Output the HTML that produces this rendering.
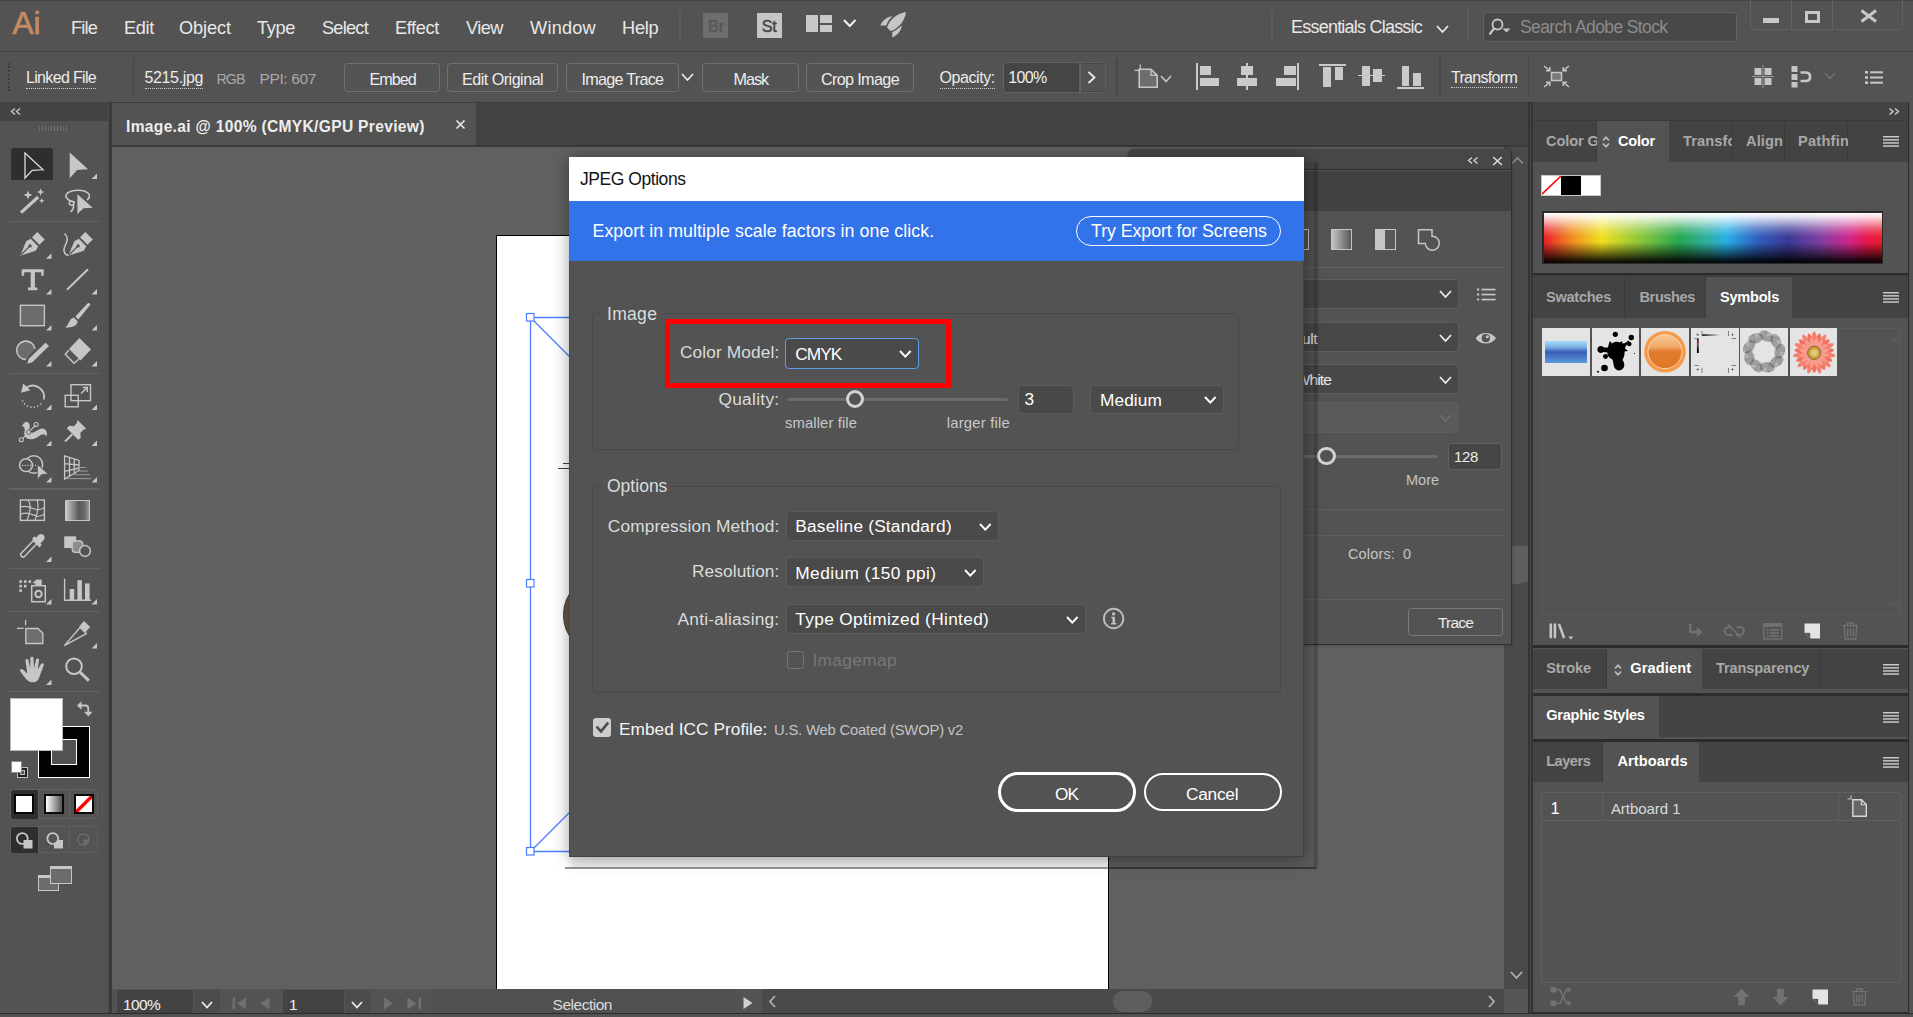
<!DOCTYPE html>
<html lang="en"><head><meta charset="utf-8"><title>Adobe Illustrator - JPEG Options</title>
<style>
html,body{margin:0;padding:0;}
body{width:1913px;height:1017px;overflow:hidden;background:#535353;position:relative;font-family:"Liberation Sans",sans-serif;}
#app{position:absolute;left:0;top:0;width:1913px;height:1017px;overflow:hidden;}
#app div,#app span,#app svg{position:absolute;box-sizing:border-box;}
#app span{white-space:nowrap;}
#app svg{overflow:visible;}
</style></head><body><div id="app">
<div style="left:0px;top:0px;width:1913px;height:1px;background:#444;"></div>
<div style="left:0px;top:51px;width:1913px;height:1px;background:#454545;"></div>
<div style="left:0px;top:102px;width:1913px;height:45px;background:#434343;"></div>
<div style="left:0px;top:102px;width:108px;height:19px;background:#434343;"></div>
<div style="left:0px;top:121px;width:108px;height:892px;background:#535353;"></div>
<div style="left:107.5px;top:102px;width:4.5px;height:911px;background:#3a3a3a;"></div>
<div style="left:107.5px;top:102px;width:1.1px;height:911px;background:#4a4a4a;"></div>
<div style="left:112px;top:102px;width:1416px;height:45px;background:#434343;"></div>
<div style="left:112px;top:103.4px;width:364px;height:41.8px;background:#535353;"></div>
<div style="left:112px;top:145.2px;width:1416px;height:1.8px;background:#3a3a3a;"></div>
<div style="left:112px;top:102px;width:1416px;height:1.4px;background:#3c3c3c;"></div>
<div style="left:112px;top:147px;width:1392px;height:842px;background:#606060;"></div>
<div style="left:1504px;top:147px;width:24px;height:842px;background:#4a4a4a;"></div>
<div style="left:112px;top:989px;width:1392px;height:24px;background:#4a4a4a;"></div>
<div style="left:1504px;top:989px;width:24px;height:24px;background:#565656;"></div>
<div style="left:112px;top:989px;width:650px;height:24px;background:#535353;"></div>
<div style="left:0px;top:1012.5px;width:1913px;height:1.7px;background:#2c2c2c;"></div>
<div style="left:0px;top:1014.2px;width:1913px;height:2.8px;background:#525252;"></div>
<div style="left:1528px;top:102px;width:5px;height:911px;background:#333;"></div>
<div style="left:1530px;top:102px;width:1px;height:911px;background:#4a4a4a;"></div>
<div style="left:1533px;top:102px;width:375px;height:911px;background:#535353;"></div>
<div style="left:1908px;top:102px;width:1.2px;height:911px;background:#2c2c2c;"></div>
<div style="left:1909.2px;top:102px;width:3.8px;height:911px;background:#535353;"></div>
<span style="left:12.5px;top:7.74px;font-size:31.5px;line-height:31.5px;color:#c48a62;-webkit-text-stroke:0.7px #c48a62;">Ai</span>
<span style="left:71px;top:18.89px;font-size:18.2px;line-height:18.2px;color:#e8e8e8;letter-spacing:-0.83px;">File</span>
<span style="left:124px;top:18.89px;font-size:18.2px;line-height:18.2px;color:#e8e8e8;letter-spacing:-0.34px;">Edit</span>
<span style="left:179px;top:18.89px;font-size:18.2px;line-height:18.2px;color:#e8e8e8;letter-spacing:-0.1px;">Object</span>
<span style="left:257px;top:18.89px;font-size:18.2px;line-height:18.2px;color:#e8e8e8;letter-spacing:-0.36px;">Type</span>
<span style="left:322px;top:18.89px;font-size:18.2px;line-height:18.2px;color:#e8e8e8;letter-spacing:-0.76px;">Select</span>
<span style="left:395px;top:18.89px;font-size:18.2px;line-height:18.2px;color:#e8e8e8;letter-spacing:-0.37px;">Effect</span>
<span style="left:466px;top:18.89px;font-size:18.2px;line-height:18.2px;color:#e8e8e8;letter-spacing:-0.53px;">View</span>
<span style="left:530px;top:18.89px;font-size:18.2px;line-height:18.2px;color:#e8e8e8;letter-spacing:0.21px;">Window</span>
<span style="left:622px;top:18.89px;font-size:18.2px;line-height:18.2px;color:#e8e8e8;letter-spacing:-0.23px;">Help</span>
<div style="left:679px;top:10px;width:2px;height:30px;background:#5c5c5c;"></div>
<div style="left:703.4px;top:13.4px;width:24.4px;height:24.3px;background:#6e6e6e;"></div>
<span style="left:707.9px;top:17.99px;font-size:16.2px;line-height:16.2px;color:#575757;letter-spacing:0.1px;-webkit-text-stroke:0.5px #575757;">Br</span>
<div style="left:757.2px;top:13.4px;width:24.5px;height:24.3px;background:#c6c6c6;"></div>
<span style="left:761.8px;top:17.99px;font-size:16.2px;line-height:16.2px;color:#484848;letter-spacing:-0.4px;-webkit-text-stroke:0.5px #484848;">St</span>
<div style="left:805.9px;top:15.2px;width:12.2px;height:16.7px;background:#c8c8c8;"></div>
<div style="left:819.5px;top:15.2px;width:12.1px;height:7.6px;background:#c8c8c8;"></div>
<div style="left:819.5px;top:24.7px;width:12.1px;height:7.2px;background:#c8c8c8;"></div>
<svg style="left:843.25px;top:19.4px;" width="13.5" height="8" viewBox="0 0 13.5 8"><path d="M1 1 L6.75 7 L12.5 1" fill="none" stroke="#f0f0f0" stroke-width="2"/></svg>
<svg style="left:870px;top:5px;" width="40" height="36" viewBox="0 0 40 36"><g fill="#c6c6c6"><path d="M36 6.9 C28 8 19.5 14 17 22.4 L20.5 26 C29 23.5 35 15 36 6.9 Z"/><path d="M22.4 11.2 C17 11.5 12.5 15.5 10.3 20.4 L16.3 20.6 C17.3 17 19.5 13.8 22.4 11.2 Z"/><path d="M31.9 19.9 C31.5 25.5 27.5 30 22.4 32.5 L22.2 26.9 C26 25.3 29.3 23 31.9 19.9 Z"/></g></svg>
<div style="left:1271px;top:10px;width:2px;height:30px;background:#5c5c5c;"></div>
<span style="left:1291px;top:18.26px;font-size:18px;line-height:18px;color:#e8e8e8;letter-spacing:-0.78px;">Essentials Classic</span>
<svg style="left:1436px;top:24.5px;" width="13" height="8" viewBox="0 0 13 8"><path d="M1 1 L6.5 7 L12 1" fill="none" stroke="#e8e8e8" stroke-width="1.8"/></svg>
<div style="left:1467px;top:10px;width:2px;height:30px;background:#5c5c5c;"></div>
<div style="left:1482.5px;top:11.5px;width:254.5px;height:30.5px;background:#484848;border:1px solid #626262;border-radius:3px;"></div>
<svg style="left:1488px;top:17px;" width="24" height="20" viewBox="0 0 24 20"><circle cx="9.5" cy="7.5" r="5" fill="none" stroke="#c6c6c6" stroke-width="1.8"/><path d="M6 11.5 L1.5 17.5" stroke="#c6c6c6" stroke-width="2.2"/><path d="M14.5 11.5 h8 l-4 4 z" fill="#c6c6c6"/></svg>
<span style="left:1520px;top:19.19px;font-size:17.5px;line-height:17.5px;color:#8c8c8c;letter-spacing:-0.62px;">Search Adobe Stock</span>
<div style="left:1749.5px;top:-4px;width:153.5px;height:33.5px;border:1px solid #616161;border-radius:4px;"></div>
<div style="left:1791px;top:0px;width:1px;height:29px;background:#616161;"></div>
<div style="left:1832px;top:0px;width:1px;height:29px;background:#616161;"></div>
<div style="left:1763px;top:17.5px;width:15.5px;height:5px;background:#c8c8c8;"></div>
<div style="left:1804.5px;top:11px;width:15.5px;height:11.5px;border:3px solid #c8c8c8;border-top-width:3.5px;"></div>
<svg style="left:1860px;top:9px;" width="18" height="14" viewBox="0 0 18 14"><path d="M1.5 1.5 L16 12.5 M16 1.5 L1.5 12.5" stroke="#c8c8c8" stroke-width="3" fill="none"/></svg>
<div style="left:8px;top:63px;width:2px;height:28px;border-left:2px dotted #3c3c3c;"></div>
<span style="left:26px;top:70.36px;font-size:16px;line-height:16px;color:#ececec;letter-spacing:-0.67px;border-bottom:1px dotted #cfcfcf;padding-bottom:1.5px;">Linked File</span>
<div style="left:132.5px;top:58px;width:1.5px;height:37px;background:#474747;"></div>
<span style="left:144.5px;top:70.36px;font-size:16px;line-height:16px;color:#ececec;letter-spacing:-0.36px;border-bottom:1px dotted #cfcfcf;padding-bottom:1.5px;">5215.jpg</span>
<span style="left:216.5px;top:71.8px;font-size:14.3px;line-height:14.3px;color:#a9a9a9;letter-spacing:-1px;">RGB</span>
<span style="left:259.5px;top:70.78px;font-size:15.5px;line-height:15.5px;color:#a9a9a9;letter-spacing:-0.37px;">PPI: 607</span>
<div style="left:344px;top:63px;width:95.6px;height:28.5px;border:1.6px solid #707070;border-radius:3.5px;"></div>
<span style="left:369.4px;top:71.09px;font-size:16.2px;line-height:16.2px;color:#ececec;letter-spacing:-1px;">Embed</span>
<div style="left:447px;top:63px;width:111px;height:28.5px;border:1.6px solid #707070;border-radius:3.5px;"></div>
<span style="left:462px;top:71.09px;font-size:16.2px;line-height:16.2px;color:#ececec;letter-spacing:-0.54px;">Edit Original</span>
<div style="left:566px;top:63px;width:112.5px;height:28.5px;border:1.6px solid #707070;border-radius:3.5px;"></div>
<span style="left:581.4px;top:71.09px;font-size:16.2px;line-height:16.2px;color:#ececec;letter-spacing:-0.73px;">Image Trace</span>
<svg style="left:680.5px;top:73px;" width="13" height="8" viewBox="0 0 13 8"><path d="M1 1 L6.5 7 L12 1" fill="none" stroke="#e8e8e8" stroke-width="1.8"/></svg>
<div style="left:702px;top:63px;width:96.7px;height:28.5px;border:1.6px solid #707070;border-radius:3.5px;"></div>
<span style="left:733.5px;top:71.09px;font-size:16.2px;line-height:16.2px;color:#ececec;letter-spacing:-1px;">Mask</span>
<div style="left:806px;top:63px;width:108px;height:28.5px;border:1.6px solid #707070;border-radius:3.5px;"></div>
<span style="left:821px;top:71.09px;font-size:16.2px;line-height:16.2px;color:#ececec;letter-spacing:-0.66px;">Crop Image</span>
<span style="left:939.6px;top:70.36px;font-size:16px;line-height:16px;color:#ececec;letter-spacing:-0.44px;border-bottom:1px dotted #cfcfcf;padding-bottom:1.5px;">Opacity:</span>
<div style="left:1003px;top:62px;width:103px;height:30.5px;background:#454545;border:1.5px solid #626262;border-radius:3.5px;"></div>
<div style="left:1079px;top:63px;width:1.5px;height:28.5px;background:#626262;"></div>
<div style="left:1080.5px;top:63.5px;width:24px;height:27.5px;background:#535353;border-radius:0 2px 2px 0;"></div>
<span style="left:1008.3px;top:70.36px;font-size:16px;line-height:16px;color:#f0f0f0;letter-spacing:-0.63px;">100%</span>
<svg style="left:1087px;top:71px;" width="10" height="13" viewBox="0 0 10 13"><path d="M1.5 1 L7.5 6.5 L1.5 12" fill="none" stroke="#ececec" stroke-width="1.8"/></svg>
<div style="left:1116px;top:58px;width:1.5px;height:37px;background:#474747;"></div>
<svg style="left:1133px;top:63px;" width="26" height="26" viewBox="0 0 26 26"><path d="M7.3 1.5 V7 M1.5 7.3 H6.5" stroke="#c6c6c6" stroke-width="1.3" fill="none"/><path d="M6.2 6.2 H18 L24.2 12.4 V24.2 H6.2 Z" fill="#6e6e6e" stroke="#c6c6c6" stroke-width="1.6"/><path d="M18 6.2 V12.4 H24.2" fill="none" stroke="#c6c6c6" stroke-width="1.3"/></svg>
<svg style="left:1159.5px;top:74.75px;" width="12" height="7.5" viewBox="0 0 12 7.5"><path d="M1 1 L6 6.5 L11 1" fill="none" stroke="#c6c6c6" stroke-width="1.6"/></svg>
<div style="left:1196px;top:63px;width:1.8px;height:27px;background:#cacaca;"></div>
<div style="left:1199.5px;top:66.2px;width:11.9px;height:8.6px;background:#cacaca;"></div>
<div style="left:1199.5px;top:78.3px;width:19.5px;height:7.5px;background:#cacaca;"></div>
<div style="left:1245.9px;top:63px;width:1.8px;height:27px;background:#cacaca;"></div>
<div style="left:1240.7px;top:66.2px;width:12.3px;height:8.6px;background:#cacaca;"></div>
<div style="left:1236.7px;top:78.3px;width:20.1px;height:7.5px;background:#cacaca;"></div>
<div style="left:1297px;top:63px;width:1.8px;height:27px;background:#cacaca;"></div>
<div style="left:1283.9px;top:66.2px;width:11.7px;height:8.6px;background:#cacaca;"></div>
<div style="left:1275.8px;top:78.3px;width:19.8px;height:7.5px;background:#cacaca;"></div>
<div style="left:1319px;top:64px;width:27px;height:1.8px;background:#cacaca;"></div>
<div style="left:1323.3px;top:67px;width:8.2px;height:19.8px;background:#cacaca;"></div>
<div style="left:1334.6px;top:67px;width:8.2px;height:12.8px;background:#cacaca;"></div>
<div style="left:1358px;top:74.6px;width:26.7px;height:1.8px;background:#cacaca;"></div>
<div style="left:1361.7px;top:65.5px;width:8.3px;height:20.1px;background:#cacaca;"></div>
<div style="left:1373px;top:69px;width:8.7px;height:13px;background:#cacaca;"></div>
<div style="left:1396.7px;top:87.2px;width:27px;height:1.8px;background:#cacaca;"></div>
<div style="left:1401.7px;top:66px;width:7.6px;height:20px;background:#cacaca;"></div>
<div style="left:1412.6px;top:73px;width:8.6px;height:13px;background:#cacaca;"></div>
<div style="left:1439px;top:58px;width:1.5px;height:37px;background:#474747;"></div>
<span style="left:1451px;top:69.86px;font-size:16px;line-height:16px;color:#ececec;letter-spacing:-0.7px;border-bottom:1px dotted #cfcfcf;padding-bottom:1.5px;">Transform</span>
<div style="left:1527.5px;top:58px;width:1.5px;height:37px;background:#474747;"></div>
<svg style="left:1543px;top:65px;" width="27" height="23" viewBox="0 0 27 23"><rect x="8.5" y="7.5" width="10" height="8" fill="#7a7a7a" stroke="#c6c6c6" stroke-width="1.5"/><g stroke="#c6c6c6" stroke-width="1.5" fill="none"><path d="M1 1 L6.5 5.5 M6.8 2 V5.8 H3"/><path d="M26 1 L20.5 5.5 M20.2 2 V5.8 H24"/><path d="M1 22 L6.5 17.5 M6.8 21 V17.2 H3"/><path d="M26 22 L20.5 17.5 M20.2 21 V17.2 H24"/></g></svg>
<svg style="left:1752px;top:64.5px;" width="22" height="23" viewBox="0 0 22 23"><g fill="#c6c6c6"><rect x="2.5" y="3" width="7" height="7"/><rect x="12.5" y="3" width="7" height="7"/><rect x="2.5" y="13" width="7" height="7"/><rect x="12.5" y="13" width="7" height="7"/></g><path d="M11 0 V23 M0 11.5 H22" stroke="#9a9a9a" stroke-width="1"/></svg>
<svg style="left:1791px;top:65px;" width="23" height="23" viewBox="0 0 23 23"><g fill="#c6c6c6"><rect x="0.5" y="1" width="6" height="6"/><rect x="0.5" y="9" width="6" height="6"/><rect x="0.5" y="17" width="6" height="5.5"/></g><path d="M9.5 7.5 H15.5 A4.3 4.3 0 0 1 15.5 16 H9.5" fill="none" stroke="#c6c6c6" stroke-width="2.6"/></svg>
<svg style="left:1823.8px;top:71.75px;" width="12" height="7.5" viewBox="0 0 12 7.5"><path d="M1 1 L6 6.5 L11 1" fill="none" stroke="#6e6e6e" stroke-width="1.6"/></svg>
<svg style="left:1864.5px;top:70px;" width="19" height="15" viewBox="0 0 19 15"><g fill="#c6c6c6"><rect x="0" y="1" width="3" height="2.6"/><rect x="0" y="6.2" width="3" height="2.6"/><rect x="0" y="11.4" width="3" height="2.6"/><rect x="5" y="1.3" width="13" height="2"/><rect x="5" y="6.5" width="13" height="2"/><rect x="5" y="11.7" width="13" height="2"/></g></svg>
<svg style="left:10px;top:107.5px;" width="12" height="8" viewBox="0 0 12 8"><path d="M5 0.5 L1.5 3.5 L5 6.5 M10 0.5 L6.5 3.5 L10 6.5" fill="none" stroke="#c8c8c8" stroke-width="1.4"/></svg>
<div style="left:38.5px;top:126px;width:28.5px;height:5px;background:repeating-linear-gradient(90deg,#6e6e6e 0,#6e6e6e 1px,transparent 1px,transparent 3px);"></div>
<div style="left:11px;top:147.5px;width:42px;height:32.5px;background:#2e2e2e;border-radius:2.5px;"></div>
<div style="left:9px;top:221.1px;width:91px;height:1.4px;background:#626262;"></div>
<div style="left:9px;top:372.7px;width:91px;height:1.4px;background:#626262;"></div>
<div style="left:9px;top:488.3px;width:91px;height:1.4px;background:#626262;"></div>
<div style="left:9px;top:567.8px;width:91px;height:1.4px;background:#626262;"></div>
<div style="left:9px;top:611px;width:91px;height:1.4px;background:#626262;"></div>
<div style="left:9px;top:690.7px;width:91px;height:1.4px;background:#626262;"></div>
<div style="left:65.3px;top:500px;width:24.4px;height:20.5px;border:1.4px solid #c6c6c6;background:linear-gradient(90deg,#c8c8c8,#5a5a5a 55%,#6a6a6a 80%,#9a9a9a);"></div>
<svg style="left:0px;top:0px;" width="112" height="1017" viewBox="0 0 112 1017"><path d="M25 153 L43 169.8 L32.2 170.4 L25 178 Z" fill="none" stroke="#dcdcdc" stroke-width="1.3" stroke-linejoin="miter"/><path d="M69.7 152.6 L88 169.3 L77.2 170 L69.7 178.2 Z" fill="#c6c6c6"/><path d="M97 179 v-5.5 l-5.5 5.5 z" fill="#c6c6c6"/><path d="M21 212.6 L38.2 197" stroke="#c6c6c6" stroke-width="3.2"/><path d="M28 190.4 L29.29 193.71 L32.6 195 L29.29 196.29 L28 199.6 L26.71 196.29 L23.4 195 L26.71 193.71 Z" fill="#c6c6c6"/><path d="M40.6 188.2 L41.66 190.94 L44.4 192 L41.66 193.06 L40.6 195.8 L39.54 193.06 L36.8 192 L39.54 190.94 Z" fill="#c6c6c6"/><path d="M41.7 198 L42.48 200.02 L44.5 200.8 L42.48 201.58 L41.7 203.6 L40.92 201.58 L38.9 200.8 L40.92 200.02 Z" fill="#c6c6c6"/><path d="M75 202 C67 201 64 196 67.5 193 C72 189.5 84 189 88.5 193.5 C90.5 196 89 198.5 87 200" fill="none" stroke="#c6c6c6" stroke-width="1.6"/><path d="M74.5 203.5 C73.5 200.5 69.5 200.5 69.2 203 C69 205.5 72.5 206 73.5 204 C74 207 73 210 70.5 212" fill="none" stroke="#c6c6c6" stroke-width="1.5"/><path d="M77.4 194.3 L92.8 207.8 L83.5 208.2 L77.4 214 Z" fill="#c6c6c6"/><g transform="translate(19.7 231.7)"><path d="M0.5 24 L6.5 9.5 L11 7 L18.5 14.5 L16 19 Z" fill="#c6c6c6"/><path d="M1.2 23.3 L9.5 15" stroke="#535353" stroke-width="1.2"/><circle cx="10.3" cy="14.2" r="1.7" fill="#535353"/><path d="M12.3 5.6 L17.6 0.3 L25 7.7 L19.7 13 Z" fill="#c6c6c6"/></g><path d="M51.5 258.7 v-5.5 l-5.5 5.5 z" fill="#c6c6c6"/><g transform="translate(67.8 231.7)"><path d="M0.5 24 L6.5 9.5 L11 7 L18.5 14.5 L16 19 Z" fill="#c6c6c6"/><path d="M1.2 23.3 L9.5 15" stroke="#535353" stroke-width="1.2"/><circle cx="10.3" cy="14.2" r="1.7" fill="#535353"/><path d="M12.3 5.6 L17.6 0.3 L25 7.7 L19.7 13 Z" fill="#c6c6c6"/></g><path d="M64.6 233.5 C69 238 67 242 65 246 C63 250 64 255 68.5 255.3" fill="none" stroke="#c6c6c6" stroke-width="1.5"/><path d="M21.7 269.3 H43.7 V275.8 H41.2 V272.3 H34.9 V287.5 H37.4 V290.2 H28 V287.5 H30.7 V272.3 H24.2 V275.8 H21.7 Z" fill="#c6c6c6"/><path d="M51.5 294.5 v-5.5 l-5.5 5.5 z" fill="#c6c6c6"/><path d="M67 289.8 L88 269.3" stroke="#c6c6c6" stroke-width="2"/><path d="M97 294.5 v-5.5 l-5.5 5.5 z" fill="#c6c6c6"/><rect x="20.4" y="305.3" width="24" height="20.4" fill="#6c6c6c" stroke="#c6c6c6" stroke-width="1.4"/><path d="M51.5 330.5 v-5.5 l-5.5 5.5 z" fill="#c6c6c6"/><path d="M75.3 316.6 L87.5 303.6 C89 302 91 303.5 90 305.3 L78.3 319.5 Z" fill="#c6c6c6"/><path d="M73.8 317.6 L77.3 320.8 C78.5 324.5 73 328.5 65.3 327.2 C69 325.5 68.5 319 73.8 317.6 Z" fill="#c6c6c6"/><path d="M97 330.5 v-5.5 l-5.5 5.5 z" fill="#c6c6c6"/><path d="M26 359.5 A9.2 9.2 0 1 1 35 349" fill="#6c6c6c" stroke="#c6c6c6" stroke-width="1.6"/><path d="M45.5 342.8 L49 346 L32 362.5 L27.3 363.6 L28.6 359 Z" fill="#c6c6c6"/><path d="M51.5 366.5 v-5.5 l-5.5 5.5 z" fill="#c6c6c6"/><path d="M79.4 338 L91 349.6 L80.5 360.5 L69 349 Z" fill="#c6c6c6"/><path d="M68.7 350.2 L65.3 354.3 L74 363.3 L79.3 358.8" fill="none" stroke="#c6c6c6" stroke-width="1.5"/><path d="M97 366.5 v-5.5 l-5.5 5.5 z" fill="#c6c6c6"/><path d="M26 388 A11.3 11.3 0 0 1 43.8 399.5" fill="none" stroke="#c6c6c6" stroke-width="1.8"/><path d="M21 392.8 L23.2 383.6 L30.3 390.3 Z" fill="#c6c6c6"/><path d="M22.3 400.5 A11.3 11.3 0 0 0 42.5 401.5" fill="none" stroke="#c6c6c6" stroke-width="1.6" stroke-dasharray="1.3 2.2"/><path d="M51.5 410 v-5.5 l-5.5 5.5 z" fill="#c6c6c6"/><rect x="71" y="384.7" width="19.5" height="16" fill="none" stroke="#c6c6c6" stroke-width="1.4"/><rect x="65.2" y="395.3" width="13" height="11.5" fill="none" stroke="#c6c6c6" stroke-width="1.4"/><path d="M81 393.5 L87 387.8 M82.8 387.5 H87.3 V392" fill="none" stroke="#c6c6c6" stroke-width="1.4"/><path d="M97 410 v-5.5 l-5.5 5.5 z" fill="#c6c6c6"/><path d="M22 426 C26 418 31 423 29.5 428 C28.5 431.5 31 434 34.5 432 C39 429.5 44 426 46.5 431.5 C47.5 434 46.5 436 46 436.5 C45 433 42 434 38.5 436.5 C33 440.5 26 440.5 24.5 435 C23.5 431.5 27 428 22 426 Z" fill="#c6c6c6"/><path d="M21.3 439.8 L36.2 424.5" stroke="#c6c6c6" stroke-width="1.1"/><circle cx="21.3" cy="439.8" r="2" fill="#535353" stroke="#c6c6c6" stroke-width="1.1"/><circle cx="36.2" cy="424.5" r="2" fill="#535353" stroke="#c6c6c6" stroke-width="1.1"/><circle cx="28.7" cy="432.2" r="2.2" fill="#c6c6c6" stroke="#535353" stroke-width="0.8"/><path d="M51.5 446 v-5.5 l-5.5 5.5 z" fill="#c6c6c6"/><path d="M77.5 420 L86.2 428.7 L83.5 429.7 L80.3 433 L80.8 437.5 L78.3 440 L66.8 428.3 L69.3 425.8 L73.8 426.2 L77 423 Z" fill="#c6c6c6"/><path d="M72.3 434.2 L65 441.5" stroke="#c6c6c6" stroke-width="2"/><path d="M97 446 v-5.5 l-5.5 5.5 z" fill="#c6c6c6"/><circle cx="33.8" cy="464.5" r="8.8" fill="none" stroke="#c6c6c6" stroke-width="1.5"/><circle cx="26" cy="465.2" r="6.4" fill="#535353" stroke="#c6c6c6" stroke-width="1.5"/><path d="M22 465.3 H36" stroke="#c6c6c6" stroke-width="1.3" stroke-dasharray="1.2 1.4"/><path d="M37.4 464.5 L48.3 474 L41.7 474.5 L37.4 479.5 Z" fill="#c6c6c6" stroke="#535353" stroke-width="0.8"/><path d="M51.5 482.5 v-5.5 l-5.5 5.5 z" fill="#c6c6c6"/><path d="M64.6 455.8 L79 460.5 V470.5 L64.6 479 Z M69.5 457.5 V476 M74.3 459 V473.3 M64.6 463.6 L79 465 M64.6 471.3 L79 468" fill="none" stroke="#c6c6c6" stroke-width="1.3"/><path d="M79 467.5 H86 M76 471 H88 M71 474.7 H90 M66 478.6 H91.5" fill="none" stroke="#9a9a9a" stroke-width="1"/><path d="M97 482.5 v-5.5 l-5.5 5.5 z" fill="#c6c6c6"/><rect x="20.4" y="500" width="24" height="20.4" fill="none" stroke="#c6c6c6" stroke-width="1.4"/><path d="M20.4 507 C28 505 31 508 36 509.5 C39 510.5 42 509 44.4 507.5 M20.4 514.5 C26 511 32 514.5 36.5 516 C40 517 42 515.5 44.4 514 M28 500 C32 505 30 512 27 520.4 M37 500 C39.5 506 37.5 513 35 520.4" fill="none" stroke="#c6c6c6" stroke-width="1.2"/><path d="M21.5 556.5 L20.5 554 L33.5 540.5 L36.8 543.8 L23.8 557.2 Z" fill="none" stroke="#c6c6c6" stroke-width="1.5" stroke-linejoin="round"/><path d="M32 538.8 L34.5 536.3 L36 537.7 L38.5 535 C40.5 533 43.5 534 44.3 536 C45 538 44.5 539.5 43 541 L40.3 543.5 L41.8 545 L39.3 547.5 Z" fill="#c6c6c6"/><path d="M51.5 562 v-5.5 l-5.5 5.5 z" fill="#c6c6c6"/><rect x="64.2" y="536.3" width="12" height="11.8" fill="#c6c6c6"/><rect x="72.2" y="541" width="10.5" height="11.3" rx="3" fill="#8c8c8c" stroke="#c6c6c6" stroke-width="1.3"/><circle cx="85" cy="551" r="5.4" fill="#535353" stroke="#c6c6c6" stroke-width="1.5"/><rect x="31.7" y="585.7" width="13.6" height="16" fill="none" stroke="#c6c6c6" stroke-width="1.5"/><rect x="35.4" y="579.6" width="6.3" height="6" fill="#c6c6c6"/><rect x="33.2" y="581.5" width="3" height="1.8" fill="#c6c6c6"/><circle cx="38.5" cy="594" r="3.2" fill="none" stroke="#c6c6c6" stroke-width="2"/><rect x="19.3" y="580.3" width="2.6" height="2.6" fill="#c6c6c6"/><rect x="23.9" y="580.3" width="2.6" height="2.6" fill="#c6c6c6"/><rect x="28.5" y="580.3" width="2.6" height="2.6" fill="#c6c6c6"/><rect x="19.3" y="584.8" width="2.6" height="2.6" fill="#c6c6c6"/><rect x="23.9" y="584.8" width="2.6" height="2.6" fill="#c6c6c6"/><rect x="19.3" y="589.3" width="2.6" height="2.6" fill="#c6c6c6"/><path d="M51.5 604.5 v-5.5 l-5.5 5.5 z" fill="#c6c6c6"/><path d="M64.6 578.7 V600.3 H91" fill="none" stroke="#c6c6c6" stroke-width="1.4"/><rect x="69.7" y="589" width="4.5" height="11" fill="#c6c6c6"/><rect x="77.4" y="580.2" width="4.5" height="19.8" fill="#c6c6c6"/><rect x="85" y="583.4" width="4.6" height="16.6" fill="#c6c6c6"/><path d="M97 604.5 v-5.5 l-5.5 5.5 z" fill="#c6c6c6"/><path d="M25.6 620 V625.3 M17 628.3 H23.6" stroke="#c6c6c6" stroke-width="1.3"/><path d="M25.8 628.5 H38 L42.8 633.3 V643.5 H25.8 Z" fill="#6e6e6e" stroke="#c6c6c6" stroke-width="1.4"/><path d="M64.4 645.6 L80 627.5 L86.3 633.5 Z" fill="none" stroke="#c6c6c6" stroke-width="1.4" stroke-linejoin="miter"/><path d="M79.3 626.3 L84 621 L90.2 627 L85.5 632.3 Z" fill="#c6c6c6"/><path d="M97 648.5 v-5.5 l-5.5 5.5 z" fill="#c6c6c6"/><path d="M30 682 C26 680 23 675 20.3 671.5 C19.3 669.5 21.5 668 23.2 669.7 L27.3 673.5 L25.5 661 C25.2 658.8 28 658.3 28.5 660.5 L30.3 668.5 L30.3 658.5 C30.3 656.2 33.5 656.2 33.5 658.5 L34 668.3 L36 659.8 C36.5 657.8 39.3 658.3 39 660.5 L37.8 669.5 L41 664 C42 662.3 44.5 663.3 43.7 665.3 C42 670 40.5 674 39 678 C38 680.5 36.5 682 34 682.3 Z" fill="#c6c6c6"/><path d="M51.5 685 v-5.5 l-5.5 5.5 z" fill="#c6c6c6"/><circle cx="74" cy="666.3" r="7.8" fill="none" stroke="#c6c6c6" stroke-width="2"/><path d="M79.8 672 L88.8 680.6" stroke="#c6c6c6" stroke-width="3"/></svg>
<div style="left:37.6px;top:725.5px;width:52.8px;height:52.8px;background:#030303;border:1px solid #fff;"></div>
<div style="left:51px;top:739px;width:26.2px;height:25.5px;background:#535353;border:1px solid #fff;"></div>
<div style="left:10.3px;top:698.3px;width:53.2px;height:53.2px;background:#fff;border:1px solid #b8b8b8;"></div>
<svg style="left:76px;top:700px;" width="18" height="18" viewBox="0 0 18 18"><path d="M4.5 5.5 H9.5 C11.5 5.5 12.3 6.5 12.3 8.5 V12" fill="none" stroke="#c6c6c6" stroke-width="1.8"/><path d="M1 5.5 L5.5 1.3 V9.7 Z" fill="#c6c6c6"/><path d="M12.3 16.5 L8 11.8 H16.6 Z" fill="#c6c6c6"/></svg>
<div style="left:16.5px;top:766.5px;width:11px;height:11px;background:#222;border:1px solid #c0c0c0;"></div>
<div style="left:19.5px;top:769.5px;width:5px;height:5px;background:#535353;border:1px solid #c0c0c0;"></div>
<div style="left:10.8px;top:761px;width:11.7px;height:11.5px;background:#fff;border:1px solid #8a8a8a;"></div>
<div style="left:10.3px;top:788.8px;width:87.3px;height:30.5px;border:1px solid #626262;border-radius:3.5px;"></div>
<div style="left:11px;top:789.5px;width:27.2px;height:29.1px;background:#2e2e2e;border-radius:3px 0 0 3px;"></div>
<div style="left:38.2px;top:789.5px;width:1px;height:29.1px;background:#626262;"></div>
<div style="left:69px;top:789.5px;width:1px;height:29.1px;background:#626262;"></div>
<div style="left:14px;top:794px;width:20.2px;height:20.2px;background:#fff;border:2px solid #0a0a0a;"></div>
<div style="left:44px;top:794px;width:19.8px;height:20.2px;border:2px solid #0a0a0a;background:linear-gradient(90deg,#fff,#555);"></div>
<div style="left:74px;top:794px;width:20.2px;height:20.2px;background:#fff;border:2px solid #0a0a0a;"></div>
<svg style="left:76px;top:796px;overflow:hidden;" width="16.2" height="16.2" viewBox="0 0 16.2 16.2"><path d="M0 16.2 L16.2 0" stroke="#f00" stroke-width="3.4"/></svg>
<div style="left:10.3px;top:826.4px;width:87.3px;height:27.1px;border:1px solid #5e5e5e;border-radius:3.5px;"></div>
<div style="left:11px;top:827px;width:27.2px;height:25.8px;background:#2e2e2e;border-radius:3px 0 0 3px;"></div>
<div style="left:38.2px;top:827px;width:1px;height:25.8px;background:#5e5e5e;"></div>
<div style="left:69px;top:827px;width:1px;height:25.8px;background:#5e5e5e;"></div>
<svg style="left:14px;top:830px;" width="82" height="22" viewBox="0 0 82 22"><circle cx="8.3" cy="8.5" r="5.4" fill="none" stroke="#c6c6c6" stroke-width="1.8"/><rect x="9.5" y="10" width="9" height="8.5" fill="#c6c6c6"/><rect x="40" y="10" width="9" height="8.5" fill="#c6c6c6"/><circle cx="38.8" cy="8.5" r="5.4" fill="#535353" stroke="#c6c6c6" stroke-width="1.8"/><circle cx="69.3" cy="9.5" r="5.6" fill="none" stroke="#6c6c6c" stroke-width="1.5"/><path d="M69.3 9.5 V15 A5.6 5.6 0 0 0 74.9 9.5 Z" fill="#6c6c6c"/></svg>
<div style="left:38px;top:875px;width:20.5px;height:15.7px;background:#6c6c6c;border:1.3px solid #c6c6c6;border-top-width:3px;"></div>
<div style="left:50px;top:866.3px;width:22px;height:18px;background:#6c6c6c;border:1.3px solid #c6c6c6;border-top-width:3px;"></div>
<span style="left:126px;top:118.99px;font-size:15.6px;line-height:15.6px;color:#ededed;font-weight:bold;letter-spacing:0.31px;">Image.ai @ 100% (CMYK/GPU Preview)</span>
<svg style="left:455px;top:119px;" width="11" height="11" viewBox="0 0 11 11"><path d="M1.5 1.5 L9.5 9.5 M9.5 1.5 L1.5 9.5" stroke="#e6e6e6" stroke-width="1.7"/></svg>
<div style="left:496.3px;top:235.3px;width:612.5px;height:759.7px;background:#fff;border:1px solid #000;"></div>
<div style="left:112px;top:989px;width:1392px;height:24px;background:#4a4a4a;"></div>
<div style="left:112px;top:989px;width:650px;height:24px;background:#535353;"></div>
<svg style="left:520px;top:310px;" width="600" height="550" viewBox="0 0 600 550"><g stroke="#4b7dff" stroke-width="1.3" fill="none"><path d="M10.5 7.5 H560 V541.5 H10.5 Z"/><path d="M10.5 7.5 L544 541.5 M10.5 541.5 L544 7.5"/></g><g fill="#fff" stroke="#4b7dff" stroke-width="1.2"><rect x="6.5" y="3.5" width="7.5" height="7.5"/><rect x="6.5" y="269.5" width="7.5" height="7.5"/><rect x="6.5" y="537.5" width="7.5" height="7.5"/></g></svg>
<div style="left:562.6px;top:463px;width:7.4px;height:1.3px;background:#2f4a30;"></div>
<div style="left:558.4px;top:468.2px;width:11.6px;height:1.3px;background:#2f4a30;"></div>
<div style="left:563px;top:576.3px;width:77.4px;height:77.4px;background:#62584e;border-radius:50%;border:1.5px solid #3f372f;"></div>
<div style="left:117px;top:990px;width:76px;height:23px;background:#434343;border-radius:3px 0 0 0;"></div>
<span style="left:123px;top:997.48px;font-size:15.5px;line-height:15.5px;color:#f0f0f0;letter-spacing:-0.66px;">100%</span>
<div style="left:194px;top:990px;width:25.5px;height:23px;background:#4c4c4c;"></div>
<svg style="left:200.5px;top:1001.25px;" width="12" height="7.5" viewBox="0 0 12 7.5"><path d="M1 1 L6 6.5 L11 1" fill="none" stroke="#ececec" stroke-width="1.8"/></svg>
<svg style="left:0px;top:0px;" width="10" height="10" viewBox="0 0 10 10"><path d="M246 997.5 v12 l-9 -6 z" fill="#707070"/><rect x="232.5" y="997.5" width="2.6" height="12" fill="#707070"/><path d="M269.5 997.5 v12 l-9 -6 z" fill="#707070"/><path d="M384 997.5 v12 l9 -6 z" fill="#707070"/><path d="M407.5 997.5 v12 l9 -6 z" fill="#707070"/><rect x="418.5" y="997.5" width="2.6" height="12" fill="#707070"/><path d="M743.5 997 v12 l9 -6 z" fill="#d0d0d0"/></svg>
<div style="left:283px;top:990px;width:60.5px;height:23px;background:#434343;"></div>
<span style="left:289px;top:997.48px;font-size:15.5px;line-height:15.5px;color:#f0f0f0;">1</span>
<div style="left:344.5px;top:990px;width:25.5px;height:23px;background:#4c4c4c;"></div>
<svg style="left:350.5px;top:1001.25px;" width="12" height="7.5" viewBox="0 0 12 7.5"><path d="M1 1 L6 6.5 L11 1" fill="none" stroke="#ececec" stroke-width="1.8"/></svg>
<div style="left:431px;top:990px;width:305px;height:23px;background:#505050;"></div>
<span style="left:552.6px;top:996.98px;font-size:15.5px;line-height:15.5px;color:#dcdcdc;letter-spacing:-0.49px;">Selection</span>
<svg style="left:768px;top:995px;" width="9" height="13" viewBox="0 0 9 13"><path d="M7 1 L2 6.5 L7 12" fill="none" stroke="#b4b4b4" stroke-width="1.7"/></svg>
<svg style="left:1486.5px;top:995px;" width="9" height="13" viewBox="0 0 9 13"><path d="M2 1 L7 6.5 L2 12" fill="none" stroke="#b4b4b4" stroke-width="1.7"/></svg>
<div style="left:1113.3px;top:991.3px;width:38.3px;height:20.7px;background:#5e5e5e;border-radius:10px;"></div>
<svg style="left:1509.5px;top:971px;" width="13" height="8" viewBox="0 0 13 8"><path d="M1 1 L6.5 7 L12 1" fill="none" stroke="#b4b4b4" stroke-width="1.7"/></svg>
<svg style="left:1510.5px;top:155.5px;" width="13" height="9" viewBox="0 0 13 9"><path d="M1 7.5 L6.5 2 L12 7.5" fill="none" stroke="#8a8a8a" stroke-width="1.7"/></svg>
<div style="left:1510.5px;top:546px;width:17px;height:36px;background:#5e5e5e;border-radius:9px 0 0 9px;"></div>
<div style="left:1500px;top:545.5px;width:28px;height:38.1px;background:#5e5e5e;border-radius:11px;"></div>
<div style="left:1128.2px;top:149.4px;width:383.9px;height:495.4px;background:#535353;border-radius:6px 6px 0 0;box-shadow:0 0 3px rgba(0,0,0,0.3);border-right:1px solid #2f2f2f;border-bottom:1px solid #2f2f2f;"></div>
<div style="left:1128.2px;top:149.4px;width:383.3px;height:20.6px;background:#474747;border-radius:6px 6px 0 0;"></div>
<div style="left:1128.2px;top:168.9px;width:383.3px;height:1.5px;background:#2c2c2c;"></div>
<div style="left:1128.2px;top:170.5px;width:383.3px;height:40.5px;background:#424242;"></div>
<svg style="left:1466.5px;top:157px;" width="13" height="8" viewBox="0 0 13 8"><path d="M5 0.5 L1.5 3.5 L5 6.5 M10.5 0.5 L7 3.5 L10.5 6.5" fill="none" stroke="#d0d0d0" stroke-width="1.4"/></svg>
<svg style="left:1492px;top:155.5px;" width="11" height="10" viewBox="0 0 11 10"><path d="M1.2 1 L9.8 9 M9.8 1 L1.2 9" stroke="#d8d8d8" stroke-width="1.7"/></svg>
<div style="left:1331px;top:229px;width:21.3px;height:21.3px;border:1.3px solid #c6c6c6;background:linear-gradient(90deg,#c4c4c4,#595959);"></div>
<div style="left:1375px;top:229px;width:21.2px;height:21.3px;border:1.3px solid #c6c6c6;background:linear-gradient(90deg,#c6c6c6 0,#c6c6c6 48%,#595959 48%);"></div>
<svg style="left:1417px;top:228px;" width="24" height="24" viewBox="0 0 24 24"><path d="M1.5 1.8 H15 V8.2 A7 7 0 1 1 8.3 15.5 H1.5 Z" fill="none" stroke="#c6c6c6" stroke-width="1.5"/></svg>
<div style="left:1292px;top:229px;width:17px;height:21.3px;border:1.3px solid #c6c6c6;"></div>
<div style="left:1140px;top:266.5px;width:363.7px;height:1.3px;background:#5f5f5f;"></div>
<div style="left:1220px;top:278.8px;width:239.3px;height:30px;background:#484848;border:1.3px solid #5e5e5e;border-radius:3.5px;"></div>
<svg style="left:1439.2px;top:290.3px;" width="13" height="8" viewBox="0 0 13 8"><path d="M1 1 L6.5 7 L12 1" fill="none" stroke="#ececec" stroke-width="1.8"/></svg>
<div style="left:1220px;top:322px;width:239.3px;height:30px;background:#484848;border:1.3px solid #5e5e5e;border-radius:3.5px;"></div>
<svg style="left:1439.2px;top:333.5px;" width="13" height="8" viewBox="0 0 13 8"><path d="M1 1 L6.5 7 L12 1" fill="none" stroke="#ececec" stroke-width="1.8"/></svg>
<div style="left:1220px;top:364px;width:239.3px;height:30.2px;background:#484848;border:1.3px solid #5e5e5e;border-radius:3.5px;"></div>
<svg style="left:1439.2px;top:375.6px;" width="13" height="8" viewBox="0 0 13 8"><path d="M1 1 L6.5 7 L12 1" fill="none" stroke="#ececec" stroke-width="1.8"/></svg>
<div style="left:1220px;top:401.7px;width:239.3px;height:31.8px;background:#5a5a5a;border:1.3px solid #5d5d5d;border-radius:3.5px;"></div>
<svg style="left:1439.2px;top:414.1px;" width="13" height="8" viewBox="0 0 13 8"><path d="M1 1 L6.5 7 L12 1" fill="none" stroke="#6e6e6e" stroke-width="1.8"/></svg>
<svg style="left:1476.5px;top:288px;" width="19" height="13" viewBox="0 0 19 13"><g fill="#c6c6c6"><rect x="0" y="0.5" width="2.2" height="2"/><rect x="0" y="5.5" width="2.2" height="2"/><rect x="0" y="10.5" width="2.2" height="2"/><rect x="4.5" y="0.7" width="14" height="1.7"/><rect x="4.5" y="5.7" width="14" height="1.7"/><rect x="4.5" y="10.7" width="14" height="1.7"/></g></svg>
<svg style="left:1474.5px;top:331px;" width="22" height="15" viewBox="0 0 22 15"><path d="M0.5 7.2 C5 0.2 16.5 0.2 21 7.2 C16.5 14.2 5 14.2 0.5 7.2 Z" fill="#c6c6c6"/><circle cx="10.8" cy="7.2" r="4.1" fill="#535353"/><circle cx="12.3" cy="5.8" r="1.5" fill="#c6c6c6"/></svg>
<span style="left:1271px;top:330.88px;font-size:15.5px;line-height:15.5px;color:#ececec;letter-spacing:-0.44px;">Default</span>
<span style="left:1232px;top:372.38px;font-size:15.5px;line-height:15.5px;color:#ececec;letter-spacing:-0.87px;">Black and White</span>
<div style="left:1240px;top:454.8px;width:197.6px;height:3px;background:#6a6a6a;border-radius:1.5px;"></div>
<div style="left:1317.4px;top:447.1px;width:18.4px;height:18.4px;background:#535353;border:3px solid #d2d2d2;border-radius:50%;"></div>
<div style="left:1447.7px;top:442.5px;width:54.5px;height:27.7px;background:#464646;border:1.3px solid #626262;border-radius:3.5px;"></div>
<span style="left:1454px;top:449.3px;font-size:15px;line-height:15px;color:#ececec;letter-spacing:-0.34px;">128</span>
<span style="left:1406px;top:472.73px;font-size:14.5px;line-height:14.5px;color:#c4c4c4;">More</span>
<div style="left:1140px;top:508.5px;width:363.7px;height:1.3px;background:#5d5d5d;"></div>
<div style="left:1140px;top:534.8px;width:363.7px;height:1.2px;background:#5d5d5d;"></div>
<div style="left:1140px;top:598.5px;width:363.7px;height:1.3px;background:#5d5d5d;"></div>
<span style="left:1348px;top:547.03px;font-size:14.5px;line-height:14.5px;color:#c4c4c4;letter-spacing:0.15px;">Colors:</span>
<span style="left:1403px;top:547.03px;font-size:14.5px;line-height:14.5px;color:#c4c4c4;">0</span>
<div style="left:1408px;top:608px;width:94.9px;height:28.4px;border:1.5px solid #7a7a7a;border-radius:3.5px;"></div>
<span style="left:1438px;top:615.18px;font-size:15.5px;line-height:15.5px;color:#ececec;letter-spacing:-0.81px;">Trace</span>
<div style="left:1532.5px;top:102px;width:375.8px;height:18.6px;background:#434343;"></div>
<svg style="left:1888px;top:107.5px;" width="13" height="8" viewBox="0 0 13 8"><path d="M1.5 0.5 L5 3.5 L1.5 6.5 M7 0.5 L10.5 3.5 L7 6.5" fill="none" stroke="#d0d0d0" stroke-width="1.4"/></svg>
<div style="left:1532.5px;top:120px;width:375.8px;height:1px;background:#3a3a3a;"></div>
<div style="left:1532.5px;top:121px;width:375.8px;height:40.5px;background:#434343;"></div>
<div style="left:1595.8px;top:121px;width:1px;height:39.5px;background:#3b3b3b;"></div>
<div style="left:1546px;top:121px;width:50.5px;height:40.5px;overflow:hidden;">
<span style="left:0px;top:12.64px;font-size:14.6px;line-height:14.6px;color:#a8a8a8;font-weight:bold;letter-spacing:-0.1px;">Color Guide</span>
</div>
<div style="left:1596.8px;top:121px;width:72.2px;height:41px;background:#535353;"></div>
<span style="left:1618px;top:133.64px;font-size:14.6px;line-height:14.6px;color:#ffffff;font-weight:bold;letter-spacing:-0.22px;">Color</span>
<div style="left:1731.7px;top:121px;width:1px;height:39.5px;background:#3b3b3b;"></div>
<div style="left:1683px;top:121px;width:49.3px;height:40.5px;overflow:hidden;">
<span style="left:0px;top:12.64px;font-size:14.6px;line-height:14.6px;color:#a8a8a8;font-weight:bold;letter-spacing:0.1px;">Transform</span>
</div>
<div style="left:1784.4px;top:121px;width:1px;height:39.5px;background:#3b3b3b;"></div>
<span style="left:1746px;top:133.64px;font-size:14.6px;line-height:14.6px;color:#a8a8a8;font-weight:bold;letter-spacing:0.1px;">Align</span>
<div style="left:1847.4px;top:121px;width:1px;height:39.5px;background:#3b3b3b;"></div>
<div style="left:1798px;top:121px;width:50.2px;height:40.5px;overflow:hidden;">
<span style="left:0px;top:12.64px;font-size:14.6px;line-height:14.6px;color:#a8a8a8;font-weight:bold;letter-spacing:0.25px;">Pathfinder</span>
</div>
<svg style="left:1883px;top:136.25px;" width="16" height="11" viewBox="0 0 16 11"><g fill="#c8c8c8"><rect x="0" y="0" width="16" height="1.5"/><rect x="0" y="3.1" width="16" height="1.5"/><rect x="0" y="6.2" width="16" height="1.5"/><rect x="0" y="9.3" width="16" height="1.5"/></g></svg>
<svg style="left:1602.3px;top:135.5px;" width="8" height="12" viewBox="0 0 8 12"><path d="M1 4.5 L4 1.2 L7 4.5 M1 7.5 L4 10.8 L7 7.5" fill="none" stroke="#bdbdbd" stroke-width="1.7"/></svg>
<div style="left:1541px;top:175.4px;width:60px;height:20.2px;background:#fff;border:1px solid #c8c8c8;"></div>
<div style="left:1561px;top:176.4px;width:19.5px;height:18.2px;background:#000;"></div>
<svg style="left:1542px;top:176.4px;overflow:hidden;" width="19" height="18.2" viewBox="0 0 19 18.2"><path d="M0 18.2 L19 0" stroke="#f00" stroke-width="1.6"/></svg>
<div style="left:1541.5px;top:211px;width:341.5px;height:52.5px;background:#2a2a2a;"></div>
<div style="left:1543.5px;top:212.5px;width:338px;height:50px;background:linear-gradient(180deg,rgba(255,255,255,1) 0,rgba(255,255,255,0.8) 10%,rgba(255,255,255,0.25) 32%,rgba(255,255,255,0) 48%,rgba(0,0,0,0) 58%,rgba(0,0,0,0.45) 78%,rgba(0,0,0,0.85) 94%,rgba(0,0,0,0.95) 100%),linear-gradient(90deg,#e8202a 0,#f08a20 8%,#f0e020 17%,#90c838 28%,#28a850 40%,#30b0a0 48%,#28b0e8 54%,#3060c0 63%,#3a3a98 72%,#8040a0 82%,#d02890 90%,#e81848 96%,#e8202a 100%);"></div>
<div style="left:1532.5px;top:272.8px;width:375.8px;height:2.2px;background:#2c2c2c;"></div>
<div style="left:1532.5px;top:275px;width:375.8px;height:2px;background:#3e3e3e;"></div>
<div style="left:1532.5px;top:277px;width:375.8px;height:40.6px;background:#434343;"></div>
<div style="left:1623.5px;top:277px;width:1px;height:39.6px;background:#3b3b3b;"></div>
<span style="left:1546px;top:289.64px;font-size:14.6px;line-height:14.6px;color:#a8a8a8;font-weight:bold;letter-spacing:-0.29px;">Swatches</span>
<div style="left:1705.4px;top:277px;width:1px;height:39.6px;background:#3b3b3b;"></div>
<span style="left:1639.5px;top:289.64px;font-size:14.6px;line-height:14.6px;color:#a8a8a8;font-weight:bold;letter-spacing:-0.42px;">Brushes</span>
<div style="left:1706.4px;top:277px;width:86px;height:41.1px;background:#535353;"></div>
<span style="left:1720px;top:289.64px;font-size:14.6px;line-height:14.6px;color:#ffffff;font-weight:bold;letter-spacing:-0.26px;">Symbols</span>
<svg style="left:1883px;top:292.3px;" width="16" height="11" viewBox="0 0 16 11"><g fill="#c8c8c8"><rect x="0" y="0" width="16" height="1.5"/><rect x="0" y="3.1" width="16" height="1.5"/><rect x="0" y="6.2" width="16" height="1.5"/><rect x="0" y="9.3" width="16" height="1.5"/></g></svg>
<div style="left:1541.7px;top:327.5px;width:358.1px;height:287.1px;border:1px solid #5c5c5c;border-radius:2px;"></div>
<div style="left:1542.1px;top:328.1px;width:47.9px;height:47.6px;background:#e4e4e4;"></div>
<div style="left:1591.6px;top:328.1px;width:47.9px;height:47.6px;background:#e4e4e4;"></div>
<div style="left:1641px;top:328.1px;width:47.9px;height:47.6px;background:#e4e4e4;"></div>
<div style="left:1690.7px;top:328.1px;width:47.9px;height:47.6px;background:#e4e4e4;"></div>
<div style="left:1740px;top:328.1px;width:47.9px;height:47.6px;background:#e4e4e4;"></div>
<div style="left:1789.6px;top:328.1px;width:47.9px;height:47.6px;background:#e4e4e4;"></div>
<div style="left:1545px;top:341px;width:42px;height:21.9px;background:linear-gradient(180deg,#a6dcfa 0,#7ab0e4 28%,#3a5cb8 50%,#4878c8 72%,#5a9ad8 100%);"></div>
<svg style="left:1591.6px;top:328.1px;" width="48" height="47.6" viewBox="0 0 48 47.6"><g fill="#000"><path d="M18 13 L20 15.5 C22 13.5 26 13 28 14.5 L30 13 L30.5 15.5 C33 15.5 35 13.5 36.5 12.5 L37.5 14 C35.5 16 33 18 33 20.5 L36 23 L32.5 23.5 C33 27 31.5 30 30.5 32 C33 35 33 39 30 41.5 C27 43.5 23 42 22 38.5 C21 35 21.5 33 20 31 C17 30 15 27.5 15.5 24.5 L11 24 C9 25.5 5.5 24.5 5.5 21.5 C5.5 18 10 17.5 11.5 19.5 L16 19.5 C16.5 17 17 15 18 13 Z"/><circle cx="23.3" cy="6.3" r="2.6"/><circle cx="39.3" cy="9.5" r="2.7"/><circle cx="37.3" cy="16" r="2.3"/><circle cx="8.8" cy="21.5" r="3.2"/><circle cx="13.5" cy="28.5" r="2.5"/><circle cx="12.5" cy="40" r="3.3"/><circle cx="6" cy="43.8" r="1"/><circle cx="42.5" cy="25.5" r="0.6"/></g></svg>
<svg style="left:1641px;top:328.1px;" width="48" height="47.6" viewBox="0 0 48 47.6"><defs><linearGradient id="og" x1="0" y1="0" x2="0" y2="1"><stop offset="0" stop-color="#f8c898"/><stop offset="0.36" stop-color="#f0a868"/><stop offset="0.5" stop-color="#e27a2c"/><stop offset="1" stop-color="#e07a28"/></linearGradient></defs><circle cx="24" cy="23.7" r="20.8" fill="#f59a48"/><circle cx="24" cy="23.7" r="17" fill="url(#og)" stroke="#fbd9b4" stroke-width="0.9"/></svg>
<svg style="left:1690.7px;top:328.1px;" width="48" height="47.6" viewBox="0 0 48 47.6"><g stroke="#555" stroke-width="0.7" fill="none"><path d="M5.5 6.7 H8 M6.7 5.5 V8 M11 3 V8 M3.5 10.5 H8"/><path d="M40.3 6.7 H42.8 M41.5 5.5 V8 M37.5 3 V8 M40.5 10.5 H45"/><path d="M5.5 41.5 H8 M6.7 40.3 V42.8 M11 40 V45 M3.5 37.5 H8"/><path d="M40.3 41.5 H42.8 M41.5 40.3 V42.8 M37.5 40 V45 M40.5 37.5 H45"/></g><defs><linearGradient id="rg" x1="0" y1="0" x2="1" y2="0"><stop offset="0" stop-color="#111"/><stop offset="1" stop-color="#111" stop-opacity="0.05"/></linearGradient><linearGradient id="rv" x1="0" y1="0" x2="0" y2="1"><stop offset="0" stop-color="#224"/><stop offset="0.3" stop-color="#a33"/><stop offset="0.5" stop-color="#363"/><stop offset="0.7" stop-color="#111"/><stop offset="1" stop-color="#000"/></linearGradient></defs><rect x="11.3" y="6.2" width="17" height="1.7" fill="url(#rg)"/><rect x="5.9" y="11" width="1.9" height="14" fill="url(#rv)"/></svg>
<svg style="left:1740px;top:328.1px;" width="48" height="47.6" viewBox="0 0 48 47.6"><ellipse cx="24" cy="7.6" rx="7.2" ry="4.3" transform="rotate(8 24 23.8) rotate(18 24 7.6)" fill="rgba(70,70,70,0.30)" stroke="rgba(40,40,40,0.45)" stroke-width="0.45"/><ellipse cx="24" cy="9.2" rx="8.6" ry="2.6" transform="rotate(28 24 23.8) rotate(-32 24 9.2)" fill="rgba(90,90,90,0.22)" stroke="rgba(40,40,40,0.3)" stroke-width="0.4"/><ellipse cx="24" cy="7.6" rx="7.2" ry="4.3" transform="rotate(48 24 23.8) rotate(18 24 7.6)" fill="rgba(70,70,70,0.30)" stroke="rgba(40,40,40,0.45)" stroke-width="0.45"/><ellipse cx="24" cy="9.2" rx="8.6" ry="2.6" transform="rotate(68 24 23.8) rotate(-32 24 9.2)" fill="rgba(90,90,90,0.22)" stroke="rgba(40,40,40,0.3)" stroke-width="0.4"/><ellipse cx="24" cy="7.6" rx="7.2" ry="4.3" transform="rotate(88 24 23.8) rotate(18 24 7.6)" fill="rgba(70,70,70,0.30)" stroke="rgba(40,40,40,0.45)" stroke-width="0.45"/><ellipse cx="24" cy="9.2" rx="8.6" ry="2.6" transform="rotate(108 24 23.8) rotate(-32 24 9.2)" fill="rgba(90,90,90,0.22)" stroke="rgba(40,40,40,0.3)" stroke-width="0.4"/><ellipse cx="24" cy="7.6" rx="7.2" ry="4.3" transform="rotate(128 24 23.8) rotate(18 24 7.6)" fill="rgba(70,70,70,0.30)" stroke="rgba(40,40,40,0.45)" stroke-width="0.45"/><ellipse cx="24" cy="9.2" rx="8.6" ry="2.6" transform="rotate(148 24 23.8) rotate(-32 24 9.2)" fill="rgba(90,90,90,0.22)" stroke="rgba(40,40,40,0.3)" stroke-width="0.4"/><ellipse cx="24" cy="7.6" rx="7.2" ry="4.3" transform="rotate(168 24 23.8) rotate(18 24 7.6)" fill="rgba(70,70,70,0.30)" stroke="rgba(40,40,40,0.45)" stroke-width="0.45"/><ellipse cx="24" cy="9.2" rx="8.6" ry="2.6" transform="rotate(188 24 23.8) rotate(-32 24 9.2)" fill="rgba(90,90,90,0.22)" stroke="rgba(40,40,40,0.3)" stroke-width="0.4"/><ellipse cx="24" cy="7.6" rx="7.2" ry="4.3" transform="rotate(208 24 23.8) rotate(18 24 7.6)" fill="rgba(70,70,70,0.30)" stroke="rgba(40,40,40,0.45)" stroke-width="0.45"/><ellipse cx="24" cy="9.2" rx="8.6" ry="2.6" transform="rotate(228 24 23.8) rotate(-32 24 9.2)" fill="rgba(90,90,90,0.22)" stroke="rgba(40,40,40,0.3)" stroke-width="0.4"/><ellipse cx="24" cy="7.6" rx="7.2" ry="4.3" transform="rotate(248 24 23.8) rotate(18 24 7.6)" fill="rgba(70,70,70,0.30)" stroke="rgba(40,40,40,0.45)" stroke-width="0.45"/><ellipse cx="24" cy="9.2" rx="8.6" ry="2.6" transform="rotate(268 24 23.8) rotate(-32 24 9.2)" fill="rgba(90,90,90,0.22)" stroke="rgba(40,40,40,0.3)" stroke-width="0.4"/><ellipse cx="24" cy="7.6" rx="7.2" ry="4.3" transform="rotate(288 24 23.8) rotate(18 24 7.6)" fill="rgba(70,70,70,0.30)" stroke="rgba(40,40,40,0.45)" stroke-width="0.45"/><ellipse cx="24" cy="9.2" rx="8.6" ry="2.6" transform="rotate(308 24 23.8) rotate(-32 24 9.2)" fill="rgba(90,90,90,0.22)" stroke="rgba(40,40,40,0.3)" stroke-width="0.4"/><ellipse cx="24" cy="7.6" rx="7.2" ry="4.3" transform="rotate(328 24 23.8) rotate(18 24 7.6)" fill="rgba(70,70,70,0.30)" stroke="rgba(40,40,40,0.45)" stroke-width="0.45"/><ellipse cx="24" cy="9.2" rx="8.6" ry="2.6" transform="rotate(348 24 23.8) rotate(-32 24 9.2)" fill="rgba(90,90,90,0.22)" stroke="rgba(40,40,40,0.3)" stroke-width="0.4"/></svg>
<svg style="left:1789.6px;top:328.1px;" width="48" height="47.6" viewBox="0 0 48 47.6"><ellipse cx="24.2" cy="13.2" rx="2.7" ry="10" transform="rotate(0 24.2 24.8)" fill="#f4806e"/><ellipse cx="24.2" cy="14" rx="2.7" ry="9.2" transform="rotate(16.36 24.2 24.8)" fill="#f27060"/><ellipse cx="24.2" cy="13.2" rx="2.7" ry="10" transform="rotate(32.73 24.2 24.8)" fill="#f4806e"/><ellipse cx="24.2" cy="14" rx="2.7" ry="9.2" transform="rotate(49.09 24.2 24.8)" fill="#f27060"/><ellipse cx="24.2" cy="13.2" rx="2.7" ry="10" transform="rotate(65.45 24.2 24.8)" fill="#f4806e"/><ellipse cx="24.2" cy="14" rx="2.7" ry="9.2" transform="rotate(81.82 24.2 24.8)" fill="#f27060"/><ellipse cx="24.2" cy="13.2" rx="2.7" ry="10" transform="rotate(98.18 24.2 24.8)" fill="#f4806e"/><ellipse cx="24.2" cy="14" rx="2.7" ry="9.2" transform="rotate(114.55 24.2 24.8)" fill="#f27060"/><ellipse cx="24.2" cy="13.2" rx="2.7" ry="10" transform="rotate(130.91 24.2 24.8)" fill="#f4806e"/><ellipse cx="24.2" cy="14" rx="2.7" ry="9.2" transform="rotate(147.27 24.2 24.8)" fill="#f27060"/><ellipse cx="24.2" cy="13.2" rx="2.7" ry="10" transform="rotate(163.64 24.2 24.8)" fill="#f4806e"/><ellipse cx="24.2" cy="14" rx="2.7" ry="9.2" transform="rotate(180 24.2 24.8)" fill="#f27060"/><ellipse cx="24.2" cy="13.2" rx="2.7" ry="10" transform="rotate(196.36 24.2 24.8)" fill="#f4806e"/><ellipse cx="24.2" cy="14" rx="2.7" ry="9.2" transform="rotate(212.73 24.2 24.8)" fill="#f27060"/><ellipse cx="24.2" cy="13.2" rx="2.7" ry="10" transform="rotate(229.09 24.2 24.8)" fill="#f4806e"/><ellipse cx="24.2" cy="14" rx="2.7" ry="9.2" transform="rotate(245.45 24.2 24.8)" fill="#f27060"/><ellipse cx="24.2" cy="13.2" rx="2.7" ry="10" transform="rotate(261.82 24.2 24.8)" fill="#f4806e"/><ellipse cx="24.2" cy="14" rx="2.7" ry="9.2" transform="rotate(278.18 24.2 24.8)" fill="#f27060"/><ellipse cx="24.2" cy="13.2" rx="2.7" ry="10" transform="rotate(294.55 24.2 24.8)" fill="#f4806e"/><ellipse cx="24.2" cy="14" rx="2.7" ry="9.2" transform="rotate(310.91 24.2 24.8)" fill="#f27060"/><ellipse cx="24.2" cy="13.2" rx="2.7" ry="10" transform="rotate(327.27 24.2 24.8)" fill="#f4806e"/><ellipse cx="24.2" cy="14" rx="2.7" ry="9.2" transform="rotate(343.64 24.2 24.8)" fill="#f27060"/><ellipse cx="24.2" cy="16.6" rx="2.1" ry="7.2" transform="rotate(11 24.2 24.8)" fill="#f79c8c"/><ellipse cx="24.2" cy="16.6" rx="2.1" ry="7.2" transform="rotate(33.5 24.2 24.8)" fill="#f79c8c"/><ellipse cx="24.2" cy="16.6" rx="2.1" ry="7.2" transform="rotate(56 24.2 24.8)" fill="#f79c8c"/><ellipse cx="24.2" cy="16.6" rx="2.1" ry="7.2" transform="rotate(78.5 24.2 24.8)" fill="#f79c8c"/><ellipse cx="24.2" cy="16.6" rx="2.1" ry="7.2" transform="rotate(101 24.2 24.8)" fill="#f79c8c"/><ellipse cx="24.2" cy="16.6" rx="2.1" ry="7.2" transform="rotate(123.5 24.2 24.8)" fill="#f79c8c"/><ellipse cx="24.2" cy="16.6" rx="2.1" ry="7.2" transform="rotate(146 24.2 24.8)" fill="#f79c8c"/><ellipse cx="24.2" cy="16.6" rx="2.1" ry="7.2" transform="rotate(168.5 24.2 24.8)" fill="#f79c8c"/><ellipse cx="24.2" cy="16.6" rx="2.1" ry="7.2" transform="rotate(191 24.2 24.8)" fill="#f79c8c"/><ellipse cx="24.2" cy="16.6" rx="2.1" ry="7.2" transform="rotate(213.5 24.2 24.8)" fill="#f79c8c"/><ellipse cx="24.2" cy="16.6" rx="2.1" ry="7.2" transform="rotate(236 24.2 24.8)" fill="#f79c8c"/><ellipse cx="24.2" cy="16.6" rx="2.1" ry="7.2" transform="rotate(258.5 24.2 24.8)" fill="#f79c8c"/><ellipse cx="24.2" cy="16.6" rx="2.1" ry="7.2" transform="rotate(281 24.2 24.8)" fill="#f79c8c"/><ellipse cx="24.2" cy="16.6" rx="2.1" ry="7.2" transform="rotate(303.5 24.2 24.8)" fill="#f79c8c"/><ellipse cx="24.2" cy="16.6" rx="2.1" ry="7.2" transform="rotate(326 24.2 24.8)" fill="#f79c8c"/><ellipse cx="24.2" cy="16.6" rx="2.1" ry="7.2" transform="rotate(348.5 24.2 24.8)" fill="#f79c8c"/><circle cx="24.2" cy="24.8" r="6.6" fill="#c9a233" stroke="#6a5a28" stroke-width="0.8"/><circle cx="24.2" cy="24.8" r="3.6" fill="#e4c67a"/></svg>
<svg style="left:1889px;top:338px;" width="9" height="6" viewBox="0 0 9 6"><path d="M0.8 5 L4.5 1.2 L8.2 5" fill="none" stroke="#5e5e5e" stroke-width="1.3"/></svg>
<svg style="left:1889px;top:601px;" width="9" height="6" viewBox="0 0 9 6"><path d="M0.8 1 L4.5 4.8 L8.2 1" fill="none" stroke="#5e5e5e" stroke-width="1.3"/></svg>
<svg style="left:1548.5px;top:622.5px;" width="26" height="18" viewBox="0 0 26 18"><g fill="#c6c6c6"><rect x="0.5" y="0.5" width="2.6" height="14.7"/><rect x="4.6" y="0.5" width="2.6" height="14.7"/><path d="M8.8 1.2 L11.2 0.4 L16.3 14.7 L13.9 15.4 Z"/><path d="M19.3 13.6 h5 l-2.5 3 z"/></g></svg>
<svg style="left:1687.5px;top:623px;" width="16" height="15" viewBox="0 0 16 15"><path d="M2.2 0.5 V9 H9.5" fill="none" stroke="#727272" stroke-width="2.3"/><path d="M8.8 3.8 L14.6 9 L8.8 14.2 Z" fill="#727272"/></svg>
<svg style="left:1723px;top:623px;" width="23" height="16" viewBox="0 0 23 16"><g fill="none" stroke="#727272" stroke-width="1.9"><path d="M9 4.2 H5.5 A3.9 3.9 0 0 0 5.5 12 H9.5"/><path d="M13.5 4.2 H17 A3.9 3.9 0 0 1 17 12 H13"/><path d="M5 1 L18 15" stroke-width="1.5"/></g></svg>
<svg style="left:1763.3px;top:622.5px;" width="20" height="17" viewBox="0 0 20 17"><rect x="0.7" y="0.7" width="18" height="15.3" fill="none" stroke="#727272" stroke-width="1.3"/><rect x="0.7" y="0.7" width="18" height="3" fill="#727272"/><g fill="#727272"><rect x="3.5" y="6.2" width="2" height="1.6"/><rect x="3.5" y="9.2" width="2" height="1.6"/><rect x="3.5" y="12.2" width="2" height="1.6"/><rect x="7" y="6.2" width="9" height="1.6"/><rect x="7" y="9.2" width="9" height="1.6"/><rect x="7" y="12.2" width="9" height="1.6"/></g></svg>
<svg style="left:1803.8px;top:622.8px;" width="17" height="16" viewBox="0 0 17 16"><path d="M0.5 0.5 H16 V15.5 H6.5 L0.5 9.5 Z" fill="#e4e4e4"/><path d="M0.5 9.5 H6.5 V15.5 Z" fill="#535353"/><path d="M1.3 9.2 H6.8 V14.7" fill="none" stroke="#e4e4e4" stroke-width="1"/></svg>
<svg style="left:1842.2px;top:621.8px;" width="17" height="18" viewBox="0 0 17 18"><g fill="none" stroke="#727272" stroke-width="1.3"><path d="M0.7 3.7 H16.3 M5.5 3.5 V1 H11.5 V3.5"/><path d="M2.3 4 L3.2 17 H13.8 L14.7 4"/><path d="M5.7 6.5 V14.5 M8.5 6.5 V14.5 M11.3 6.5 V14.5"/></g></svg>
<div style="left:1532.5px;top:645.2px;width:375.8px;height:3.3px;background:#2c2c2c;"></div>
<div style="left:1532.5px;top:648.5px;width:375.8px;height:40.8px;background:#434343;"></div>
<div style="left:1606.2px;top:648.5px;width:1px;height:39.8px;background:#3b3b3b;"></div>
<span style="left:1546.2px;top:661.34px;font-size:14.6px;line-height:14.6px;color:#a8a8a8;font-weight:bold;letter-spacing:-0.11px;">Stroke</span>
<div style="left:1607.2px;top:648.5px;width:94.8px;height:41.3px;background:#535353;"></div>
<span style="left:1630.2px;top:661.34px;font-size:14.6px;line-height:14.6px;color:#ffffff;font-weight:bold;letter-spacing:0.12px;">Gradient</span>
<div style="left:1820.4px;top:648.5px;width:1px;height:39.8px;background:#3b3b3b;"></div>
<span style="left:1716px;top:661.34px;font-size:14.6px;line-height:14.6px;color:#a8a8a8;font-weight:bold;letter-spacing:-0.13px;">Transparency</span>
<svg style="left:1883px;top:663.9px;" width="16" height="11" viewBox="0 0 16 11"><g fill="#c8c8c8"><rect x="0" y="0" width="16" height="1.5"/><rect x="0" y="3.1" width="16" height="1.5"/><rect x="0" y="6.2" width="16" height="1.5"/><rect x="0" y="9.3" width="16" height="1.5"/></g></svg>
<svg style="left:1614.3px;top:663.5px;" width="8" height="12" viewBox="0 0 8 12"><path d="M1 4.5 L4 1.2 L7 4.5 M1 7.5 L4 10.8 L7 7.5" fill="none" stroke="#bdbdbd" stroke-width="1.7"/></svg>
<div style="left:1532.5px;top:689.3px;width:375.8px;height:4px;background:#535353;"></div>
<div style="left:1532.5px;top:693.3px;width:375.8px;height:2.7px;background:#2c2c2c;"></div>
<div style="left:1532.5px;top:696px;width:375.8px;height:41.3px;background:#434343;"></div>
<div style="left:1532.5px;top:696px;width:126.5px;height:41.8px;background:#535353;"></div>
<span style="left:1546.2px;top:708.04px;font-size:14.6px;line-height:14.6px;color:#ffffff;font-weight:bold;letter-spacing:-0.27px;">Graphic Styles</span>
<svg style="left:1883px;top:711.65px;" width="16" height="11" viewBox="0 0 16 11"><g fill="#c8c8c8"><rect x="0" y="0" width="16" height="1.5"/><rect x="0" y="3.1" width="16" height="1.5"/><rect x="0" y="6.2" width="16" height="1.5"/><rect x="0" y="9.3" width="16" height="1.5"/></g></svg>
<div style="left:1532.5px;top:737.3px;width:375.8px;height:2px;background:#535353;"></div>
<div style="left:1532.5px;top:739.3px;width:375.8px;height:2.7px;background:#2c2c2c;"></div>
<div style="left:1532.5px;top:742px;width:375.8px;height:40.3px;background:#434343;"></div>
<div style="left:1601.7px;top:742px;width:1px;height:39.3px;background:#3b3b3b;"></div>
<span style="left:1546.2px;top:754.44px;font-size:14.6px;line-height:14.6px;color:#a8a8a8;font-weight:bold;letter-spacing:-0.5px;">Layers</span>
<div style="left:1602.7px;top:742px;width:96.3px;height:40.8px;background:#535353;"></div>
<span style="left:1617.4px;top:754.44px;font-size:14.6px;line-height:14.6px;color:#ffffff;font-weight:bold;letter-spacing:0.07px;">Artboards</span>
<svg style="left:1883px;top:757.15px;" width="16" height="11" viewBox="0 0 16 11"><g fill="#c8c8c8"><rect x="0" y="0" width="16" height="1.5"/><rect x="0" y="3.1" width="16" height="1.5"/><rect x="0" y="6.2" width="16" height="1.5"/><rect x="0" y="9.3" width="16" height="1.5"/></g></svg>
<div style="left:1541.2px;top:792.3px;width:359.5px;height:190.7px;border:1px solid #5f5f5f;border-radius:2px;"></div>
<div style="left:1542px;top:819.5px;width:358px;height:1px;background:#5f5f5f;"></div>
<div style="left:1602px;top:793px;width:1px;height:27px;background:#5f5f5f;"></div>
<div style="left:1838.3px;top:793px;width:1px;height:27px;background:#5f5f5f;"></div>
<span style="left:1550.5px;top:799.83px;font-size:16.5px;line-height:16.5px;color:#ffffff;">1</span>
<span style="left:1610.9px;top:800.8px;font-size:15px;line-height:15px;color:#dadada;letter-spacing:-0.04px;">Artboard 1</span>
<svg style="left:1847px;top:794.5px;" width="22" height="23" viewBox="0 0 22 23"><path d="M4 0.5 V4.5 M0.5 4 H3.3" stroke="#c6c6c6" stroke-width="1.1"/><path d="M5.8 4.7 H14.5 L19.3 9.5 V21.3 H5.8 Z" fill="#666" stroke="#d8d8d8" stroke-width="1.4"/><path d="M14.3 5 V9.7 H19" fill="none" stroke="#d8d8d8" stroke-width="1.1"/></svg>
<svg style="left:1550px;top:986px;" width="22" height="22" viewBox="0 0 22 22"><g fill="#727272"><rect x="0.5" y="1" width="5.5" height="5.5"/><rect x="0.5" y="14.5" width="5.5" height="5.5"/></g><g fill="none" stroke="#727272" stroke-width="1.6"><path d="M6 3.8 H10 L16.5 17.3 H20"/><path d="M6 17.3 H10 L16.5 3.8 H20"/></g><path d="M17.5 0.8 L21.5 3.8 L17.5 6.8 Z M17.5 14.3 L21.5 17.3 L17.5 20.3 Z" fill="#727272"/></svg>
<svg style="left:1732.5px;top:988px;" width="17" height="18" viewBox="0 0 17 18"><path d="M8.5 0.5 L16.5 9 H11.8 V17.3 H5.2 V9 H0.5 Z" fill="#727272"/></svg>
<svg style="left:1771.5px;top:988px;" width="17" height="18" viewBox="0 0 17 18"><path d="M8.5 17.5 L16.5 9 H11.8 V0.7 H5.2 V9 H0.5 Z" fill="#727272"/></svg>
<svg style="left:1811.7px;top:988.8px;" width="17" height="16" viewBox="0 0 17 16"><path d="M0.5 0.5 H16 V15.5 H6.5 L0.5 9.5 Z" fill="#e4e4e4"/><path d="M0.5 9.5 H6.5 V15.5 Z" fill="#535353"/><path d="M1.3 9.2 H6.8 V14.7" fill="none" stroke="#e4e4e4" stroke-width="1"/></svg>
<svg style="left:1850.5px;top:987.8px;" width="17" height="18" viewBox="0 0 17 18"><g fill="none" stroke="#727272" stroke-width="1.3"><path d="M0.7 3.7 H16.3 M5.5 3.5 V1 H11.5 V3.5"/><path d="M2.3 4 L3.2 17 H13.8 L14.7 4"/><path d="M5.7 6.5 V14.5 M8.5 6.5 V14.5 M11.3 6.5 V14.5"/></g></svg>
<div style="left:1532.5px;top:1011.8px;width:376.8px;height:1.7px;background:#2c2c2c;"></div>
<div style="left:1304.3px;top:161.7px;width:11px;height:705.9px;background:rgba(0,0,0,0.07);"></div>
<div style="left:565.7px;top:856.6px;width:738.6px;height:11px;background:linear-gradient(90deg,rgba(0,0,0,0),rgba(0,0,0,0.07) 8px);"></div>
<div style="left:568.7px;top:156.7px;width:735.6px;height:699.9px;box-shadow:0 1px 15px rgba(0,0,0,0.38);"></div>
<div style="left:564.7px;top:867px;width:751.6px;height:1.8px;background:rgba(0,0,0,0.4);filter:blur(0.7px);"></div>
<div style="left:1314.5px;top:161.7px;width:2.2px;height:706.9px;background:rgba(0,0,0,0.36);filter:blur(0.8px);"></div>
<div style="left:568.7px;top:156.7px;width:735.6px;height:699.9px;background:#535353;border-right:1px solid #414141;border-bottom:1px solid #414141;border-left:1px solid #4a4a4a;"></div>
<div style="left:569.3px;top:156.7px;width:734.4px;height:44.6px;background:#ffffff;"></div>
<div style="left:569.3px;top:201.3px;width:734.4px;height:59.5px;background:#3273e9;"></div>
<span style="left:580px;top:171.09px;font-size:17.5px;line-height:17.5px;color:#141414;letter-spacing:-0.45px;">JPEG Options</span>
<span style="left:592.5px;top:223.23px;font-size:17.8px;line-height:17.8px;color:#ffffff;letter-spacing:0.06px;">Export in multiple scale factors in one click.</span>
<div style="left:1075.9px;top:216px;width:205.6px;height:29.9px;border:1.8px solid #fff;border-radius:15px;"></div>
<span style="left:1091px;top:223.23px;font-size:17.8px;line-height:17.8px;color:#ffffff;letter-spacing:-0.06px;">Try Export for Screens</span>
<div style="left:592px;top:313.3px;width:647px;height:137.2px;border:1.3px solid #494949;border-radius:3px;"></div>
<div style="left:601.7px;top:305px;width:60.7px;height:17px;background:#535353;"></div>
<span style="left:607px;top:305.99px;font-size:17.5px;line-height:17.5px;color:#dcdcdc;letter-spacing:0.31px;">Image</span>
<div style="left:665px;top:319.3px;width:286px;height:68.4px;border:5.1px solid #fe0000;"></div>
<span style="left:680px;top:343.56px;font-size:17.3px;line-height:17.3px;color:#dcdcdc;letter-spacing:0.12px;">Color Model:</span>
<div style="left:785px;top:337.7px;width:133.5px;height:31.2px;background:#4a4a4a;border:1.4px solid #5b9bea;border-radius:4px;"></div>
<span style="left:795.3px;top:345.56px;font-size:17.3px;line-height:17.3px;color:#ffffff;letter-spacing:-0.97px;">CMYK</span>
<svg style="left:898.6px;top:350.3px;" width="12.6" height="7.6" viewBox="0 0 12.6 7.6"><path d="M1 1 L6.3 6.6 L11.6 1" fill="none" stroke="#ffffff" stroke-width="2"/></svg>
<span style="left:718.4px;top:390.96px;font-size:17.3px;line-height:17.3px;color:#dcdcdc;letter-spacing:0.31px;">Quality:</span>
<div style="left:786.5px;top:397.6px;width:221.5px;height:3.2px;background:#6a6a6a;border-radius:1.5px;"></div>
<div style="left:846.1px;top:390px;width:18.4px;height:18.4px;background:#535353;border:3px solid #d2d2d2;border-radius:50%;"></div>
<div style="left:1018px;top:384.6px;width:56px;height:29.2px;background:#484848;border:1.4px solid #5c5c5c;border-radius:4px;"></div>
<span style="left:1024.5px;top:390.96px;font-size:17.3px;line-height:17.3px;color:#ffffff;">3</span>
<div style="left:1090px;top:384.6px;width:134px;height:29.2px;background:#4a4a4a;border:1.4px solid #5c5c5c;border-radius:4px;"></div>
<span style="left:1100px;top:391.86px;font-size:17.3px;line-height:17.3px;color:#ffffff;letter-spacing:0.08px;">Medium</span>
<svg style="left:1204.1px;top:396.2px;" width="12.6" height="7.6" viewBox="0 0 12.6 7.6"><path d="M1 1 L6.3 6.6 L11.6 1" fill="none" stroke="#ffffff" stroke-width="2"/></svg>
<span style="left:785px;top:415.97px;font-size:14.8px;line-height:14.8px;color:#c8c8c8;letter-spacing:0.11px;">smaller file</span>
<span style="left:946.8px;top:415.97px;font-size:14.8px;line-height:14.8px;color:#c8c8c8;letter-spacing:0.21px;">larger file</span>
<div style="left:592px;top:485.5px;width:689.3px;height:207.3px;border:1.3px solid #494949;border-radius:3px;"></div>
<div style="left:601.7px;top:477px;width:70.1px;height:17px;background:#535353;"></div>
<span style="left:607px;top:478.09px;font-size:17.5px;line-height:17.5px;color:#dcdcdc;letter-spacing:0.01px;">Options</span>
<span style="left:607.8px;top:517.86px;font-size:17.3px;line-height:17.3px;color:#dcdcdc;letter-spacing:0.13px;">Compression Method:</span>
<div style="left:785.6px;top:510.5px;width:213.6px;height:30.4px;background:#4a4a4a;border:1.4px solid #5c5c5c;border-radius:4px;"></div>
<span style="left:795.3px;top:517.86px;font-size:17.3px;line-height:17.3px;color:#ffffff;letter-spacing:0.2px;">Baseline (Standard)</span>
<svg style="left:979.3px;top:522.7px;" width="12.6" height="7.6" viewBox="0 0 12.6 7.6"><path d="M1 1 L6.3 6.6 L11.6 1" fill="none" stroke="#ffffff" stroke-width="2"/></svg>
<span style="left:692px;top:563.16px;font-size:17.3px;line-height:17.3px;color:#dcdcdc;letter-spacing:0.09px;">Resolution:</span>
<div style="left:785.6px;top:557px;width:198.2px;height:30.4px;background:#4a4a4a;border:1.4px solid #5c5c5c;border-radius:4px;"></div>
<span style="left:795.3px;top:564.56px;font-size:17.3px;line-height:17.3px;color:#ffffff;letter-spacing:0.42px;">Medium (150 ppi)</span>
<svg style="left:963.9px;top:569.2px;" width="12.6" height="7.6" viewBox="0 0 12.6 7.6"><path d="M1 1 L6.3 6.6 L11.6 1" fill="none" stroke="#ffffff" stroke-width="2"/></svg>
<span style="left:677.6px;top:610.86px;font-size:17.3px;line-height:17.3px;color:#dcdcdc;letter-spacing:0.2px;">Anti-aliasing:</span>
<div style="left:785.6px;top:603.6px;width:300.6px;height:30.4px;background:#4a4a4a;border:1.4px solid #5c5c5c;border-radius:4px;"></div>
<span style="left:795.3px;top:611.06px;font-size:17.3px;line-height:17.3px;color:#ffffff;letter-spacing:0.33px;">Type Optimized (Hinted)</span>
<svg style="left:1066.3px;top:615.8px;" width="12.6" height="7.6" viewBox="0 0 12.6 7.6"><path d="M1 1 L6.3 6.6 L11.6 1" fill="none" stroke="#ffffff" stroke-width="2"/></svg>
<svg style="left:1102px;top:606.5px;" width="23" height="23" viewBox="0 0 23 23"><circle cx="11.6" cy="11.5" r="9.7" fill="none" stroke="#bcbcbc" stroke-width="1.9"/><circle cx="11.6" cy="6.9" r="1.6" fill="#c4c4c4"/><path d="M9.3 9.8 H12.9 V16 H14.3 V17.4 H9.1 V16 H10.5 V11.2 H9.3 Z" fill="#c4c4c4"/></svg>
<div style="left:786.5px;top:651.4px;width:17.7px;height:17.8px;border:1.3px solid #737373;border-radius:2.5px;"></div>
<span style="left:812.4px;top:652.36px;font-size:17.3px;line-height:17.3px;color:#777777;letter-spacing:0.36px;">Imagemap</span>
<div style="left:592.8px;top:718px;width:18.7px;height:19px;background:#cdcdcd;border-radius:3px;"></div>
<svg style="left:592.8px;top:718px;" width="18.7" height="19" viewBox="0 0 18.7 19"><path d="M3.6 8.6 L8 13.4 L15.2 4.6" fill="none" stroke="#4c4c4c" stroke-width="2.6"/></svg>
<span style="left:619px;top:720.66px;font-size:17.3px;line-height:17.3px;color:#f4f4f4;letter-spacing:0.03px;">Embed ICC Profile:</span>
<span style="left:774px;top:722.77px;font-size:14.8px;line-height:14.8px;color:#c4c4c4;letter-spacing:-0.19px;">U.S. Web Coated (SWOP) v2</span>
<div style="left:997.7px;top:772.3px;width:138.3px;height:39.4px;border:3.2px solid #fff;border-radius:20px;"></div>
<span style="left:1055px;top:785.66px;font-size:17.3px;line-height:17.3px;color:#ffffff;letter-spacing:-1px;">OK</span>
<div style="left:1143.5px;top:772.6px;width:138px;height:38.8px;border:2px solid #fff;border-radius:20px;"></div>
<span style="left:1186px;top:785.66px;font-size:17.3px;line-height:17.3px;color:#ffffff;letter-spacing:-0.26px;">Cancel</span>
</div></body></html>
